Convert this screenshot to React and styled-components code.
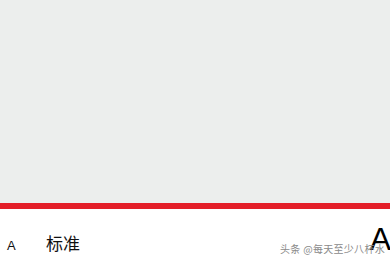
import React from 'react';
import styled, { createGlobalStyle } from 'styled-components';

const GlobalStyle = createGlobalStyle`
  html, body {
    margin: 0;
    padding: 0;
    background: #ffffff;
    overflow: hidden;
  }
  body {
    font-family: "Liberation Sans", "Noto Sans CJK SC", sans-serif;
  }
`;

const Page = styled.div`
  display: flex;
  flex-direction: column;
  width: 390px;
  height: 261px;
  overflow: hidden;
`;

const Preview = styled.div`
  height: 203px;
  background: #eceeed;
`;

const Slider = styled.div`
  height: 6px;
  background: #e31d28;
`;

const SizeRow = styled.div`
  position: relative;
  display: flex;
  align-items: baseline;
  height: 52px;
  padding: 14px 0 0 7px;
  box-sizing: border-box;
  line-height: 1;
`;

const SmallA = styled.span`
  font-size: 13px;
  color: #111;
  width: 39px;
`;

const Label = styled.span`
  font-family: "Noto Sans CJK SC", sans-serif;
  font-size: 17px;
  color: #111;
  flex: 1;
`;

const BigA = styled.span`
  font-size: 32px;
  color: #000;
  margin-right: -1px;
`;

const Watermark = styled.span`
  position: absolute;
  left: 280px;
  top: 35px;
  font-family: "Noto Sans CJK SC", sans-serif;
  font-size: 10px;
  letter-spacing: 0.3px;
  color: #8a8a8a;
  white-space: nowrap;
`;

export default function App() {
  return (
    <Page>
      <GlobalStyle />
      <Preview />
      <Slider />
      <SizeRow>
        <SmallA>A</SmallA>
        <Label>标准</Label>
        <Watermark>头条 @每天至少八杯水</Watermark>
        <BigA>A</BigA>
      </SizeRow>
    </Page>
  );
}
